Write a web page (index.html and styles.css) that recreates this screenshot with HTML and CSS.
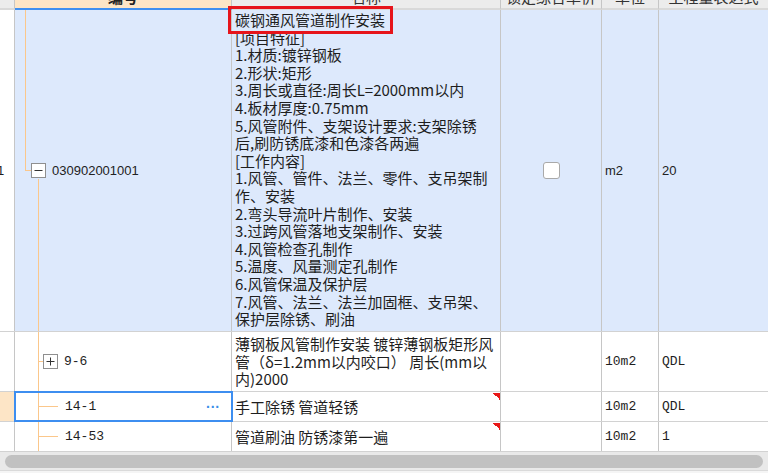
FILE: index.html
```html
<!DOCTYPE html>
<html lang="zh-CN">
<head>
<meta charset="utf-8">
<title>清单</title>
<link rel="stylesheet" href="styles.css">
</head>
<body>
<div class="sheet">
  <div class="row head">
    <div class="cell c0"></div>
    <div class="cell c1 hc"><span class="ht strong">编号</span></div>
    <div class="cell c2 hc"><span class="ht">名称</span></div>
    <div class="cell c3 hc"><span class="ht">锁定综合单价</span></div>
    <div class="cell c4 hc"><span class="ht">单位</span></div>
    <div class="cell c5 hc"><span class="ht">工程量表达式</span></div>
  </div>

  <div class="row r1">
    <div class="cell c0"><span class="rn">1</span></div>
    <div class="cell c1 tree-root">
      <svg class="tog" width="15" height="15" viewBox="0 0 15 15"><rect x="0.5" y="0.5" width="14" height="14" fill="#fff" stroke="#8f8f8f"/><line x1="3.5" y1="7.5" x2="11.5" y2="7.5" stroke="#333" stroke-width="1"/></svg>
      <span class="code">030902001001</span>
    </div>
    <div class="cell c2 multi">
      <div class="ln">碳钢通风管道制作安装</div>
      <div class="ln">[项目特征]</div>
      <div class="ln">1.材质:镀锌钢板</div>
      <div class="ln">2.形状:矩形</div>
      <div class="ln">3.周长或直径:周长L=2000mm以内</div>
      <div class="ln">4.板材厚度:0.75mm</div>
      <div class="ln">5.风管附件、支架设计要求:支架除锈</div>
      <div class="ln">后,刷防锈底漆和色漆各两遍</div>
      <div class="ln">[工作内容]</div>
      <div class="ln">1.风管、管件、法兰、零件、支吊架制</div>
      <div class="ln">作、安装</div>
      <div class="ln">2.弯头导流叶片制作、安装</div>
      <div class="ln">3.过跨风管落地支架制作、安装</div>
      <div class="ln">4.风管检查孔制作</div>
      <div class="ln">5.温度、风量测定孔制作</div>
      <div class="ln">6.风管保温及保护层</div>
      <div class="ln">7.风管、法兰、法兰加固框、支吊架、</div>
      <div class="ln">保护层除锈、刷油</div>
    </div>
    <div class="cell c3 center"><span class="chk"></span></div>
    <div class="cell c4"><span class="sans">m2</span></div>
    <div class="cell c5"><span class="sans">20</span></div>
  </div>

  <div class="row r2">
    <div class="cell c0"></div>
    <div class="cell c1 tree-mid">
      <svg class="tog" width="15" height="15" viewBox="0 0 15 15"><rect x="0.5" y="0.5" width="14" height="14" fill="#fff" stroke="#8f8f8f"/><line x1="3.5" y1="7.5" x2="11.5" y2="7.5" stroke="#333"/><line x1="7.5" y1="3.5" x2="7.5" y2="11.5" stroke="#333"/></svg>
      <span class="mono">9-6</span>
    </div>
    <div class="cell c2 multi mid">
      <div class="ln">薄钢板风管制作安装 镀锌薄钢板矩形风</div>
      <div class="ln">管（δ=1.2mm以内咬口） 周长(mm以</div>
      <div class="ln">内)2000</div>
    </div>
    <div class="cell c3"></div>
    <div class="cell c4"><span class="mono">10m2</span></div>
    <div class="cell c5"><span class="mono">QDL</span></div>
  </div>

  <div class="row r3">
    <div class="cell c0 sel-num"></div>
    <div class="cell c1 tree-leaf selected">
      <span class="mono">14-1</span>
      <span class="dots">···</span>
    </div>
    <div class="cell c2 flag"><span class="ln">手工除锈 管道轻锈</span></div>
    <div class="cell c3"></div>
    <div class="cell c4"><span class="mono">10m2</span></div>
    <div class="cell c5"><span class="mono">QDL</span></div>
  </div>

  <div class="row r4">
    <div class="cell c0"></div>
    <div class="cell c1 tree-leaf">
      <span class="mono">14-53</span>
    </div>
    <div class="cell c2 flag"><span class="ln">管道刷油 防锈漆第一遍</span></div>
    <div class="cell c3"></div>
    <div class="cell c4"><span class="mono">10m2</span></div>
    <div class="cell c5"><span class="mono">1</span></div>
  </div>

  <div class="hscroll"><div class="thumb"></div></div>
  <div class="foot"></div>
</div>
<div class="callout"></div>
</body>
</html>
```

FILE: styles.css
```css
html, body {
  margin: 0;
  padding: 0;
  background: #ffffff;
  overflow: hidden;
}
body {
  width: 768px;
  height: 473px;
  font-family: "Noto Sans CJK SC", "Noto Sans", sans-serif;
  color: #1e1e1e;
}
.sheet {
  display: flex;
  flex-direction: column;
  width: 768px;
}
.row {
  display: grid;
  grid-template-columns: 15px 217px 269px 101px 57px 1fr;
  border-bottom: 1px solid #d2d2d2;
}
.cell {
  box-sizing: border-box;
  border-right: 1px solid #c6c6c6;
  display: flex;
  align-items: center;
  overflow: hidden;
  min-width: 0;
}
.c5 { border-right: none; }

/* header */
.head {
  height: 10px;
  border-bottom: none;
}
.head .cell {
  background: #ececec;
  border-bottom: 2px solid #d9d9d9;
  justify-content: center;
  align-items: flex-start;
}
.head .c1 {
  background: #fde5c6;
  border-bottom: 2px solid #3f8ff0;
}
.ht {
  display: block;
  font-size: 15px;
  line-height: 15px;
  margin-top: -11px;
  white-space: nowrap;
  color: #333;
}
.ht.strong { font-weight: bold; color: #222; }

/* row 1 */
.r1 { height: 321px; }
.r1 .c1, .r1 .c2, .r1 .c3, .r1 .c4, .r1 .c5 { background-color: #dde9fc; }
.r1 .c0 { background: #fff; }
.rn {
  font-family: "Liberation Sans", sans-serif;
  font-size: 13px;
  margin-left: -3px;
}
.tree-root {
  padding-left: 16px;
  background-image:
    linear-gradient(#fbc78b, #fbc78b),
    linear-gradient(#fbc78b, #fbc78b),
    linear-gradient(#fbc78b, #fbc78b);
  background-repeat: no-repeat;
  background-position: 10px 0, 10px 50%, 23px 100%;
  background-size: 1px 50%, 6px 1px, 1px calc(50% - 8px);
}
.tog { display: block; flex: none; }
.code {
  font-family: "Liberation Sans", sans-serif;
  font-size: 13px;
  margin-left: 6px;
  color: #222;
}
.multi {
  flex-direction: column;
  align-items: flex-start;
  justify-content: flex-start;
  padding: 1px 0 0 3px;
}
.multi.mid { justify-content: center; padding-top: 0; }
.ln {
  display: block;
  font-size: 15px;
  line-height: 17.6px;
  white-space: nowrap;
  color: #1e1e1e;
}
.c2 > .ln { padding-left: 3px; }
.multi > .ln { padding-left: 0; }
.center { justify-content: center; }
.chk {
  width: 17px;
  height: 17px;
  box-sizing: border-box;
  border: 1px solid #a9a9a9;
  border-radius: 3px;
  background: #fff;
}
.sans {
  font-family: "Liberation Sans", sans-serif;
  font-size: 13px;
  padding-left: 3px;
  color: #222;
}
.mono {
  font-family: "Liberation Mono", monospace;
  font-size: 13px;
  color: #1e1e1e;
}
.c4 > .mono, .c5 > .mono { padding-left: 3px; }

/* row 2 */
.r2 { height: 59px; }
.tree-mid {
  padding-left: 28px;
  background-image:
    linear-gradient(#fbc78b, #fbc78b),
    linear-gradient(#fbc78b, #fbc78b);
  background-repeat: no-repeat;
  background-position: 23px 0, 23px 50%;
  background-size: 1px 100%, 5px 1px;
}
.tree-mid .mono { margin-left: 6px; }

/* rows 3, 4 */
.r3, .r4 { height: 29px; }
.tree-leaf {
  padding-left: 50px;
  padding-right: 11px;
  background-image:
    linear-gradient(#fbc78b, #fbc78b),
    linear-gradient(#fbc78b, #fbc78b);
  background-repeat: no-repeat;
  background-position: 23px 0, 23px 50%;
  background-size: 1px 100%, 20px 1px;
}
.sel-num { background: #fde5c6; }
.selected {
  outline: 2px solid #3d8ef0;
  outline-offset: -1px;
}
.dots {
  margin-left: auto;
  font-family: "Liberation Sans", sans-serif;
  font-weight: bold;
  font-size: 14px;
  color: #3a8ee8;
}
.flag {
  background-image: linear-gradient(to bottom left, #e81818 50%, transparent 50%);
  background-repeat: no-repeat;
  background-size: 7px 7px;
  background-position: 100% 1px;
}

/* scrollbar */
.hscroll {
  height: 18px;
  box-sizing: border-box;
  background: #e9e9e9;
  padding: 3px 5px 2px 5px;
}
.thumb {
  height: 13px;
  border-radius: 7px;
  background: #c1c1c1;
}
.foot {
  height: 7px;
  box-sizing: border-box;
  background: #f5f5f5;
  border-top: 1px solid #dadada;
}

/* annotation */
.callout {
  position: absolute;
  left: 228px;
  top: 6px;
  width: 165px;
  height: 28px;
  box-sizing: border-box;
  border: 3px solid #e6141b;
}
```
